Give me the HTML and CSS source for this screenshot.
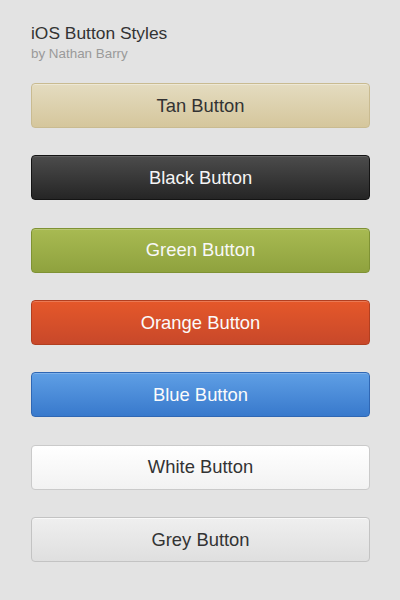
FILE: index.html
```html
<!DOCTYPE html>
<html>
<head>
<meta charset="utf-8">
<link rel="stylesheet" href="styles.css">
</head>
<body>
<div class="page">
  <header class="head">
    <h1 class="title">iOS Button Styles</h1>
    <p class="sub">by Nathan Barry</p>
  </header>
  <div class="buttons">
    <button class="btn tan">Tan Button</button>
    <button class="btn black">Black Button</button>
    <button class="btn green">Green Button</button>
    <button class="btn orange">Orange Button</button>
    <button class="btn blue">Blue Button</button>
    <button class="btn white">White Button</button>
    <button class="btn grey">Grey Button</button>
  </div>
</div>
</body>
</html>
```
FILE: styles.css
```css
html, body {
  margin: 0;
  padding: 0;
  background: #e3e3e3;
}
body {
  font-family: "Liberation Sans", Arial, sans-serif;
  width: 400px;
  height: 600px;
  overflow: hidden;
}
.page {
  padding: 23px 30px 0 31px;
}
.head {
  display: flex;
  flex-direction: column;
  gap: 3px;
}
.title {
  margin: 0;
  font-size: 17.4px;
  line-height: 20px;
  font-weight: normal;
  color: #333;
}
.sub {
  margin: 0;
  font-size: 13.4px;
  line-height: 16px;
  color: #9a9a9a;
}
.buttons {
  margin-top: 21px;
  display: flex;
  flex-direction: column;
  gap: 27.35px;
}
.btn {
  box-sizing: border-box;
  width: 339px;
  height: 45px;
  flex-shrink: 0;
  border-radius: 4px;
  border: 1px solid;
  font-family: "Liberation Sans", Arial, sans-serif;
  font-size: 18.4px;
  padding: 0;
  text-align: center;
  color: #fff;
}
.tan {
  background: linear-gradient(#e4dcc0, #d5c69c);
  border-color: #c9bb91;
  color: #333;
  box-shadow: inset 0 1px 0 rgba(255,255,255,0.35);
}
.black {
  background: linear-gradient(#4c4c4c, #252525);
  border-color: #141414;
  color: #f5f5f5;
  box-shadow: inset 0 1px 0 rgba(255,255,255,0.12);
}
.green {
  background: linear-gradient(#a8ba52, #8fa23e);
  border-color: #7f9234;
  color: #f8f8f8;
  box-shadow: inset 0 1px 0 rgba(255,255,255,0.2);
}
.orange {
  background: linear-gradient(#e5582a, #c8482a);
  border-color: #b23f20;
  color: #fbfbfb;
  box-shadow: inset 0 1px 0 rgba(255,255,255,0.2);
}
.blue {
  background: linear-gradient(#5f9fe5, #3879cc);
  border-color: #2f67b4;
  color: #fbfbfb;
  box-shadow: inset 0 1px 0 rgba(255,255,255,0.2);
}
.white {
  background: linear-gradient(#ffffff, #f2f2f2);
  border-color: #cacaca;
  color: #333;
}
.grey {
  background: linear-gradient(#efefef, #dfdfdf);
  border-color: #c3c3c3;
  color: #333;
  box-shadow: inset 0 1px 0 rgba(255,255,255,0.6);
}
```
